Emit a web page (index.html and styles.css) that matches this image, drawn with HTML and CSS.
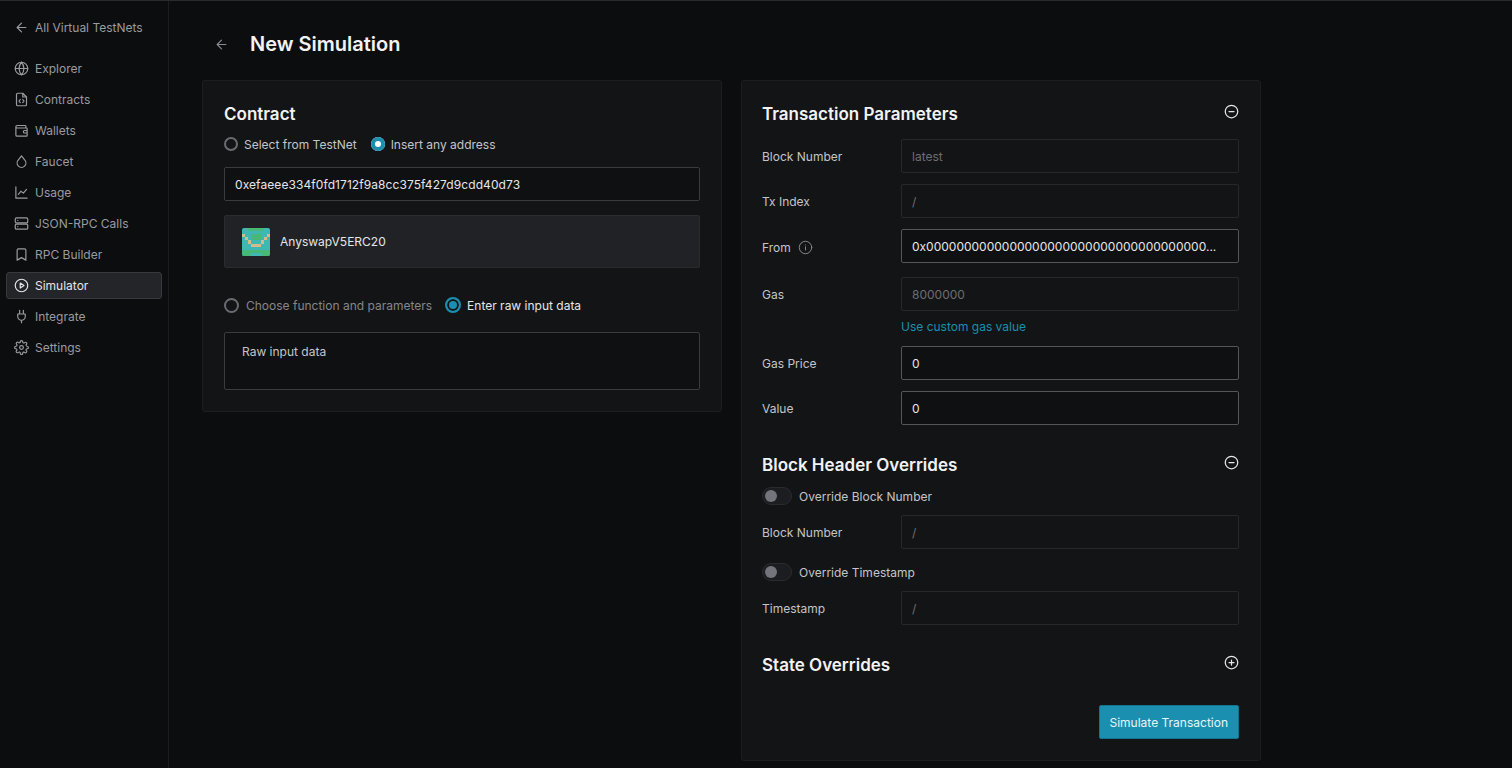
FILE: index.html
```html
<!DOCTYPE html>
<html lang="en">
<head>
    <meta charset="UTF-8">
    <meta name="viewport" content="width=device-width, initial-scale=1.0">
    <title>New Simulation</title>
    <link rel="stylesheet" href="styles.css">
</head>
<body>
    <div class="layout">
        <aside class="sidebar">
            <a class="back-link">
                <svg class="icon" viewBox="0 0 24 24"><path d="M19 12H5M12 19l-7-7 7-7"/></svg>
                All Virtual TestNets
            </a>
            <nav class="nav">
                <a class="nav-item"><svg class="icon" viewBox="0 0 24 24"><circle cx="12" cy="12" r="10"/><path d="M2 12h20M12 2a15 15 0 0 1 0 20a15 15 0 0 1 0-20"/></svg>Explorer</a>
                <a class="nav-item"><svg class="icon" viewBox="0 0 24 24"><path d="M14 2H6a2 2 0 0 0-2 2v16a2 2 0 0 0 2 2h12a2 2 0 0 0 2-2V8zM14 2v6h6M10 12l-2 2.5 2 2.5M14 12l2 2.5-2 2.5"/></svg>Contracts</a>
                <a class="nav-item"><svg class="icon" viewBox="0 0 24 24"><path d="M19 7V5a1 1 0 0 0-1-1H5a2 2 0 0 0 0 4h15a1 1 0 0 1 1 1v11a1 1 0 0 1-1 1H5a2 2 0 0 1-2-2V6M21 12h-4a2 2 0 0 0 0 4h4"/></svg>Wallets</a>
                <a class="nav-item"><svg class="icon" viewBox="0 0 24 24"><path d="M12 3l5 6.5a7 7 0 1 1-10 0z"/></svg>Faucet</a>
                <a class="nav-item"><svg class="icon" viewBox="0 0 24 24"><path d="M3 3v18h18M7 15l4-5 4 3 5-6"/></svg>Usage</a>
                <a class="nav-item"><svg class="icon" viewBox="0 0 24 24"><rect x="2" y="3" width="20" height="8" rx="2"/><rect x="2" y="13" width="20" height="8" rx="2"/><path d="M6 7h.01M6 17h.01"/></svg>JSON-RPC Calls</a>
                <a class="nav-item"><svg class="icon" viewBox="0 0 24 24"><path d="M19 21l-7-4-7 4V5a2 2 0 0 1 2-2h10a2 2 0 0 1 2 2z"/></svg>RPC Builder</a>
                <a class="nav-item active"><svg class="icon" viewBox="0 0 24 24"><circle cx="12" cy="12" r="10"/><path d="M10 8l6 4-6 4z"/></svg>Simulator</a>
                <a class="nav-item"><svg class="icon" viewBox="0 0 24 24"><path d="M9 2v6M15 2v6M6 8h12v4a6 6 0 0 1-12 0zM12 18v4"/></svg>Integrate</a>
                <a class="nav-item"><svg class="icon" viewBox="0 0 24 24"><circle cx="12" cy="12" r="3"/><path d="M19.4 15a1.7 1.7 0 0 0 .3 1.8l.1.1a2 2 0 1 1-2.9 2.9l-.1-.1a1.7 1.7 0 0 0-2.8 1.2V21a2 2 0 1 1-4 0v-.1a1.7 1.7 0 0 0-2.9-1.2l-.1.1a2 2 0 1 1-2.9-2.9l.1-.1a1.7 1.7 0 0 0-1.2-2.8H3a2 2 0 1 1 0-4h.1a1.7 1.7 0 0 0 1.2-2.9l-.1-.1a2 2 0 1 1 2.9-2.9l.1.1a1.7 1.7 0 0 0 1.8.3H9a1.7 1.7 0 0 0 1-1.5V3a2 2 0 1 1 4 0v.1a1.7 1.7 0 0 0 2.9 1.2l.1-.1a2 2 0 1 1 2.9 2.9l-.1.1a1.7 1.7 0 0 0-.3 1.8V9a1.7 1.7 0 0 0 1.5 1H21a2 2 0 1 1 0 4h-.1a1.7 1.7 0 0 0-1.5 1z"/></svg>Settings</a>
            </nav>
        </aside>

        <main class="main">
            <div class="page-title">
                <svg class="icon title-back" viewBox="0 0 24 24"><path d="M19 12H5M12 19l-7-7 7-7"/></svg>
                <h1>New Simulation</h1>
            </div>

            <div class="columns">
                <section class="card contract-card">
                    <h2>Contract</h2>
                    <div class="radio-row">
                        <label class="radio"><span class="dot"></span>Select from TestNet</label>
                        <label class="radio checked"><span class="dot"></span>Insert any address</label>
                    </div>
                    <div class="input address">0xefaeee334f0fd1712f9a8cc375f427d9cdd40d73</div>
                    <div class="contract-box">
                        <svg class="identicon" viewBox="0 0 9 9" shape-rendering="crispEdges">
                            <rect width="9" height="9" fill="#3fb8b4"/>
                            <path fill="#48b878" d="M2 0h5v1H2zM3 2h3v2H3zM0 7h3v2H0zM6 7h3v2H6zM3 7h3v1H3z"/>
                            <path fill="#d2bc8c" d="M0 2h1v1H0zM8 2h1v1H8zM1 3h1v1H1zM7 3h1v1H7zM2 4h1v1H2zM6 4h1v1H6zM3 5h3v1H3z"/>
                        </svg>
                        <span>AnyswapV5ERC20</span>
                    </div>
                    <div class="radio-row large">
                        <label class="radio"><span class="dot"></span>Choose function and parameters</label>
                        <label class="radio checked"><span class="dot"></span>Enter raw input data</label>
                    </div>
                    <div class="input textarea">Raw input data</div>
                </section>

                <section class="card params-card">
                    <div class="section-head first">
                        <h2>Transaction Parameters</h2>
                        <svg class="toggle-icon" viewBox="0 0 24 24"><circle cx="12" cy="12" r="10"/><path d="M8 12h8"/></svg>
                    </div>
                    <div class="field">
                        <label>Block Number</label>
                        <div class="input muted">latest</div>
                    </div>
                    <div class="field">
                        <label>Tx Index</label>
                        <div class="input muted">/</div>
                    </div>
                    <div class="field from">
                        <label>From <svg class="info" viewBox="0 0 24 24"><circle cx="12" cy="12" r="10"/><path d="M12 16v-5M12 8h.01"/></svg></label>
                        <div class="input strong">0x0000000000000000000000000000000000000...</div>
                    </div>
                    <div class="field gas">
                        <label>Gas</label>
                        <div class="input muted">8000000</div>
                    </div>
                    <a class="gas-link">Use custom gas value</a>
                    <div class="field">
                        <label>Gas Price</label>
                        <div class="input strong">0</div>
                    </div>
                    <div class="field">
                        <label>Value</label>
                        <div class="input strong">0</div>
                    </div>

                    <div class="section-head block-head">
                        <h2>Block Header Overrides</h2>
                        <svg class="toggle-icon" viewBox="0 0 24 24"><circle cx="12" cy="12" r="10"/><path d="M8 12h8"/></svg>
                    </div>
                    <div class="switch-row"><span class="switch"></span>Override Block Number</div>
                    <div class="field">
                        <label>Block Number</label>
                        <div class="input muted">/</div>
                    </div>
                    <div class="switch-row second"><span class="switch"></span>Override Timestamp</div>
                    <div class="field">
                        <label>Timestamp</label>
                        <div class="input muted">/</div>
                    </div>

                    <div class="section-head state-head">
                        <h2>State Overrides</h2>
                        <svg class="toggle-icon" viewBox="0 0 24 24"><circle cx="12" cy="12" r="10"/><path d="M8 12h8M12 8v8"/></svg>
                    </div>
                    <div class="actions">
                        <button type="button">Simulate Transaction</button>
                    </div>
                </section>
            </div>
        </main>
    </div>
</body>
</html>
```

FILE: styles.css
```css
* {
    box-sizing: border-box;
}
html, body {
    height: 100%;
}
body {
    font-family: Inter, 'Liberation Sans', sans-serif;
    font-size: 12px;
    margin: 0;
    padding: 0;
    background-color: #0c0d0f;
    color: #e6e6e8;
    overflow: hidden;
}
.layout {
    display: flex;
    height: 768px;
    border-top: 1px solid #2a2b2e;
}
.icon {
    width: 15px;
    height: 15px;
    flex: none;
    fill: none;
    stroke: currentColor;
    stroke-width: 1.9;
    stroke-linecap: round;
    stroke-linejoin: round;
}
.sidebar {
    width: 169px;
    flex: none;
    padding: 13px 6px 0;
    border-right: 1px solid #1c1d20;
    color: #9a9ba0;
}
.back-link, .nav-item {
    display: flex;
    align-items: center;
    gap: 6px;
    height: 27px;
    padding-left: 7px;
    border: 1px solid transparent;
    border-radius: 3px;
}
.nav {
    display: flex;
    flex-direction: column;
    gap: 4px;
    margin-top: 14px;
}
.nav-item.active {
    background-color: #242528;
    border-color: #38393d;
    color: #e6e6e8;
}
.main {
    flex: 1;
    padding: 0 0 0 33px;
}
.page-title {
    display: flex;
    align-items: center;
    height: 79px;
    padding-left: 12px;
    padding-top: 7px;
}
.title-back {
    margin-right: 21px;
    stroke-width: 1.8;
    color: #8a8b90;
}
h1 {
    margin: 0;
    font-size: 20px;
    font-weight: 600;
    color: #f2f2f3;
}
h2 {
    margin: 0;
    font-size: 17px;
    font-weight: 600;
    line-height: 22px;
    color: #f2f2f3;
}
.columns {
    display: flex;
    align-items: flex-start;
    gap: 19px;
}
.card {
    width: 520px;
    padding: 22px 21px 21px;
    background-color: #131416;
    border: 1px solid #1d1e21;
    border-radius: 3px;
}
.params-card {
    padding-left: 20px;
}
.radio-row {
    display: flex;
    gap: 14px;
    margin-top: 10px;
    color: #c4c5c9;
}
.radio {
    display: flex;
    align-items: center;
    gap: 6px;
    height: 18px;
}
.dot {
    width: 14px;
    height: 14px;
    border: 2px solid #6a6b70;
    border-radius: 50%;
}
.radio.checked .dot {
    background-color: #fff;
    border: 0;
    box-shadow: inset 0 0 0 4px #1a8fb0;
}
.radio-row.large {
    gap: 13px;
    margin-top: 27px;
    color: #85868b;
}
.radio-row.large .radio {
    gap: 7px;
    height: 20px;
}
.radio-row.large .radio.checked {
    gap: 6px;
    color: #e6e6e8;
}
.radio-row.large .dot {
    width: 15px;
    height: 15px;
}
.radio-row.large .radio.checked .dot {
    width: 16px;
    height: 16px;
    background-color: #1a8fb0;
    border: 2px solid #1a8fb0;
    box-shadow: inset 0 0 0 2px #131416;
}
.input {
    display: flex;
    align-items: center;
    height: 34px;
    padding: 0 10px;
    background-color: #0f1012;
    border: 1px solid #3a3b3f;
    border-radius: 2px;
}
.address {
    margin-top: 14px;
    letter-spacing: 0.08px;
}
.contract-box {
    display: flex;
    align-items: center;
    gap: 10px;
    height: 53px;
    margin-top: 14px;
    padding-left: 17px;
    background-color: #212225;
    border: 1px solid #2b2c30;
    border-radius: 2px;
}
.identicon {
    width: 28px;
    height: 28px;
    border-radius: 2px;
}
.textarea {
    align-items: flex-start;
    height: 58px;
    margin-top: 17px;
    padding: 11px 17px;
    color: #c4c5c9;
}
.section-head {
    display: flex;
    justify-content: space-between;
    align-items: center;
    height: 22px;
}
.toggle-icon {
    width: 15px;
    height: 15px;
    margin-top: -5px;
    fill: none;
    stroke: #e6e6e8;
    stroke-width: 2;
    stroke-linecap: round;
}
.field {
    display: flex;
    align-items: center;
    margin-top: 11px;
}
.section-head + .field {
    margin-top: 14px;
}
.field label {
    display: flex;
    align-items: center;
    gap: 7px;
    width: 139px;
    flex: none;
    color: #c4c5c9;
}
.field .input {
    width: 338px;
    min-width: 0;
}
.field .input.muted {
    color: #6d6e73;
    border-color: #27282b;
    background-color: #131416;
}
.field .input.strong {
    color: #e6e6e8;
    border-color: #55565a;
}
.field.from label {
    padding-top: 3px;
}
.field.gas {
    margin-top: 14px;
}
.info {
    width: 15px;
    height: 15px;
    fill: none;
    stroke: #85868b;
    stroke-width: 1.6;
    stroke-linecap: round;
}
.gas-link {
    display: block;
    margin: 8px 0 0 139px;
    line-height: 16px;
    color: #1a8fb0;
}
.gas-link + .field {
    margin-top: 11px;
}
.block-head {
    margin-top: 29px;
}
.switch-row {
    display: flex;
    align-items: center;
    gap: 7px;
    height: 18px;
    margin-top: 11px;
    color: #c4c5c9;
}
.switch-row + .field {
    margin-top: 10px;
}
.switch-row.second {
    margin-top: 14px;
}
.switch {
    position: relative;
    width: 30px;
    height: 18px;
    background-color: #1c1d20;
    border: 1px solid #2a2b2e;
    border-radius: 9px;
}
.switch::after {
    content: "";
    position: absolute;
    top: 2px;
    left: 2px;
    width: 12px;
    height: 12px;
    background-color: #74757c;
    border-radius: 50%;
}
.state-head {
    margin-top: 29px;
}
.actions {
    display: flex;
    justify-content: flex-end;
    margin-top: 29px;
}
button {
    height: 34px;
    padding: 0 10px;
    font-family: inherit;
    font-size: 12px;
    color: #e8f6fa;
    background-color: #1a8fb0;
    border: 1px solid #14738e;
    border-radius: 2px;
}
```
